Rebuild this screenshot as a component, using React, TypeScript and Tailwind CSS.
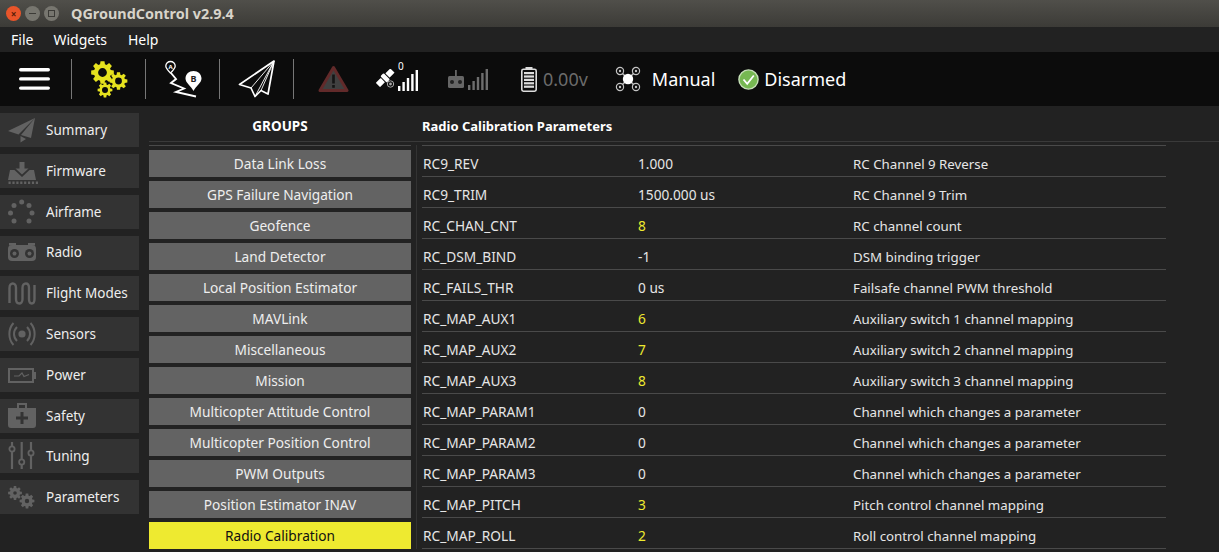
import React from "react";

function gearPath(cx: number, cy: number, R: number, r: number, hole: number, teeth: number) {
  const pts: string[] = [];
  const step = (Math.PI * 2) / teeth;
  for (let i = 0; i < teeth; i++) {
    const a = i * step;
    const w = step * 0.22;
    const v: [number, number][] = [
      [r, a - step / 2 + w * 0.6],
      [R, a - w],
      [R, a + w],
      [r, a + step / 2 - w * 0.6],
    ];
    v.forEach(([rad, an]) => pts.push(`${(cx + rad * Math.cos(an)).toFixed(2)} ${(cy + rad * Math.sin(an)).toFixed(2)}`));
  }
  const c = `M${cx - hole} ${cy}a${hole} ${hole} 0 1 0 ${hole * 2} 0a${hole} ${hole} 0 1 0 ${-hole * 2} 0Z`;
  return `M${pts.join("L")}Z${c}`;
}

const Hamburger = () => (
  <svg width="31" height="22" viewBox="0 0 31 22" className="block">
    <rect x="0" y="0" width="31" height="3.4" rx="1.7" fill="#fff" />
    <rect x="0" y="9.2" width="31" height="3.4" rx="1.7" fill="#fff" />
    <rect x="0" y="18.4" width="31" height="3.4" rx="1.7" fill="#fff" />
  </svg>
);

const Gears = () => (
  <svg width="37" height="37" viewBox="0 0 37 37" className="block">
    <path fillRule="evenodd" fill="#e6e21e" d={gearPath(11.5, 11.5, 11.5, 8.6, 4.4, 8)} />
    <path fillRule="evenodd" fill="#e6e21e" d={gearPath(27.5, 20, 9, 6.6, 3.4, 8)} />
    <path fillRule="evenodd" fill="#e6e21e" d={gearPath(14, 29, 7.5, 5.6, 3, 8)} />
  </svg>
);

const MapIcon = () => (
  <svg width="38" height="40" viewBox="0 0 38 40" className="block">
    <path d="M5.5 2.500C3 2.500 0.800 4.500 0.800 7 0.800 9.500 4 12.500 5.500 14 7 12.500 10.200 9.500 10.200 7 10.200 4.500 8 2.500 5.500 2.500Z" fill="none" stroke="#fff" strokeWidth="1.300" />
    <path d="M6 14L11 20L6 24L19 29.500L11 33L31 37.500" fill="none" stroke="#fff" strokeWidth="1.900" />
    <path d="M28.500 12C24 12 20.500 15 20.500 19.500C20.500 24 26 27 28.500 32C31 27 36.500 24 36.500 19.500C36.500 15 33 12 28.500 12Z" fill="#fff" />
    <text x="28.500" y="23" textAnchor="middle" fontSize="9" fontWeight="700" fill="#222" fontFamily="Noto Sans">B</text>
    <text x="5.500" y="9.500" textAnchor="middle" fontSize="6" fontWeight="700" fill="#fff" fontFamily="Noto Sans">A</text>
  </svg>
);

const Plane = () => (
  <svg width="38" height="38" viewBox="0 0 38 38" className="block">
    <path d="M36 1L1.500 24.500L13 28L17 36.500L23 30.500L30 34Z" fill="none" stroke="#fff" strokeWidth="1.700" strokeLinejoin="round" />
    <path d="M36 1L13 28M36 1L17 36.500M36 1L23 30.500" fill="none" stroke="#fff" strokeWidth="0.900" />
  </svg>
);

const Warning = () => (
  <svg width="31" height="28" viewBox="0 0 31 28" className="block">
    <path d="M15.500 2.500L29 25.500H2Z" fill="#404040" stroke="#622a2a" strokeWidth="3" strokeLinejoin="round" />
    <rect x="14.200" y="9.500" width="2.600" height="9" fill="#151515" />
    <rect x="14.200" y="20" width="2.600" height="2.800" fill="#151515" />
  </svg>
);

const Bars = ({ color }: { color: string }) => (
  <svg width="20" height="21" viewBox="0 0 20 21" className="block">
    <rect x="0" y="16" width="2.400" height="5" fill={color} />
    <rect x="4.400" y="12" width="2.400" height="9" fill={color} />
    <rect x="8.800" y="8" width="2.400" height="13" fill={color} />
    <rect x="13.200" y="4" width="2.400" height="17" fill={color} />
    <rect x="17.600" y="0" width="2.400" height="21" fill={color} />
  </svg>
);

const Satellite = () => (
  <svg width="21" height="21" viewBox="0 0 21 21" className="block">
    <g transform="rotate(-45 9 9)" fill="#fff">
      <rect x="-1" y="6" width="7" height="6" rx="0.500" />
      <rect x="7" y="4.500" width="4.500" height="9" rx="1" />
      <rect x="12.500" y="6" width="7" height="6" rx="0.500" />
    </g>
    <circle cx="14.500" cy="15" r="3.200" fill="none" stroke="#aaa" strokeWidth="1" />
    <circle cx="14.500" cy="15" r="1.400" fill="#aaa" />
  </svg>
);

const RadioSmall = () => (
  <svg width="16" height="18" viewBox="0 0 16 18" className="block">
    <rect x="7" y="0" width="1.800" height="8" fill="#666" />
    <rect x="0" y="6" width="16" height="12" rx="1.500" fill="#666" />
    <circle cx="4" cy="12" r="2" fill="#222" />
    <circle cx="12" cy="12" r="2" fill="#222" />
  </svg>
);

const Battery = () => (
  <svg width="16" height="25" viewBox="0 0 16 25" className="block">
    <rect x="4.500" y="0" width="7" height="2.500" fill="#ddd" />
    <rect x="0.800" y="2.300" width="14.400" height="21.900" rx="1.600" fill="none" stroke="#ddd" strokeWidth="1.600" />
    {[5, 8.400, 11.800, 15.200, 18.600].map((y) => (
      <rect key={y} x="3" y={y} width="10" height="2.200" fill="#ddd" />
    ))}
  </svg>
);

const Drone = () => (
  <svg width="26" height="26" viewBox="0 0 26 26" className="block">
    <path d="M5 5L21 21M21 5L5 21" stroke="#bbb" strokeWidth="1.600" />
    {[
      [5, 5],
      [21, 5],
      [5, 21],
      [21, 21],
    ].map(([x, y]) => (
      <g key={`${x}${y}`}>
        <circle cx={x} cy={y} r="3.600" fill="#0c0c0c" stroke="#c4c4c4" strokeWidth="1.200" />
        <circle cx={x} cy={y} r="1.200" fill="#c4c4c4" />
      </g>
    ))}
    <circle cx="13" cy="13" r="5.200" fill="#fff" />
  </svg>
);

const Check = () => (
  <svg width="21" height="21" viewBox="0 0 21 21" className="block">
    <circle cx="10.500" cy="10.500" r="9.600" fill="#76b852" stroke="#c6e0b8" strokeWidth="1.400" />
    <path d="M5.500 10.500L9.200 14.800L15.800 6.500" fill="none" stroke="#fff" strokeWidth="1.800" />
  </svg>
);

const G = "#626262";
const SideIcon = ({ name }: { name: string }) => {
  const s = { width: 30, height: 30, viewBox: "0 0 30 30", className: "block" };
  switch (name) {
    case "Summary":
      return (
        <svg {...s}>
          <path d="M27 3L0 16L10.500 19.500ZM27 3L13 20L23 23ZM12.500 21V27.500L18 24Z" fill={G} />
        </svg>
      );
    case "Firmware":
      return (
        <svg {...s}>
          <path d="M11.500 6H16.500V12.500H20.500L14 18.500L7.500 12.500H11.500Z" fill={G} />
          <path d="M2 14H6.500L14 21L21.500 14H26L28 24H0Z" fill={G} />
          {[0, 1, 2, 3, 4, 5, 6, 7].map((i) => (
            <rect key={i} x={0.500 + i * 3.900} y="25.500" width="2.200" height="2.500" fill={G} />
          ))}
        </svg>
      );
    case "Airframe":
      return (
        <svg {...s}>
          {[
            [13.700, 5],
            [21, 8.500],
            [24, 16],
            [21, 24],
            [6, 24],
            [2.500, 16],
            [6, 8.500],
          ].map(([x, y]) => (
            <circle key={`${x}-${y}`} cx={x} cy={y} r="2.500" fill={G} />
          ))}
        </svg>
      );
    case "Radio":
      return (
        <svg {...s}>
          <rect x="1" y="5" width="7" height="2.500" fill={G} />
          <rect x="20" y="5" width="7" height="2.500" fill={G} />
          <rect x="0" y="7" width="28" height="16" rx="4" fill={G} />
          <circle cx="6.500" cy="15.500" r="4.500" fill="#333" />
          <circle cx="6.500" cy="15.500" r="2" fill={G} />
          <circle cx="21.500" cy="15.500" r="4.500" fill="#333" />
          <circle cx="21.500" cy="15.500" r="2" fill={G} />
        </svg>
      );
    case "Flight Modes":
      return (
        <svg {...s}>
          <path d="M1.500 25V10C1.500 4 8 4 8 10V21C8 27 14.500 27 14.500 21V10C14.500 4 21 4 21 10V21C21 27 26.500 27 26.500 21V7" fill="none" stroke={G} strokeWidth="2.400" />
        </svg>
      );
    case "Sensors":
      return (
        <svg {...s}>
          <circle cx="14" cy="15" r="3.600" fill={G} />
          <path d="M9 8C5 12 5 18 9 22M19 8C23 12 23 18 19 22" fill="none" stroke={G} strokeWidth="2" />
          <path d="M5.500 4C0 10 0 20 5.500 26M22.500 4C28 10 28 20 22.500 26" fill="none" stroke={G} strokeWidth="2" />
        </svg>
      );
    case "Power":
      return (
        <svg {...s}>
          <rect x="1" y="9" width="24" height="13" fill="none" stroke={G} strokeWidth="2" />
          <rect x="25.500" y="12" width="2.500" height="7" fill={G} />
          <path d="M6 16L11 16L14 13L16 16.500L21 14.500" fill="none" stroke={G} strokeWidth="1.200" />
        </svg>
      );
    case "Safety":
      return (
        <svg {...s}>
          <path fillRule="evenodd" d="M9 2H19V7H28V24Q28 27 25 27H3Q0 27 0 24V7H9ZM11 4V7H17V4ZM12.500 11V15.500H8V18.500H12.500V23H15.500V18.500H20V15.500H15.500V11Z" fill={G} />
        </svg>
      );
    case "Tuning":
      return (
        <svg {...s}>
          <path d="M4 1V28M13.700 1V28M23 1V28" stroke={G} strokeWidth="2.200" />
          {[
            [4, 8],
            [13.700, 21],
            [23, 12],
          ].map(([x, y]) => (
            <circle key={x} cx={x} cy={y} r="2.600" fill="#333" stroke={G} strokeWidth="1.800" />
          ))}
        </svg>
      );
    default:
      return (
        <svg {...s}>
          <path fillRule="evenodd" fill={G} d={gearPath(7, 11, 7, 5.200, 1.800, 8)} />
          <path fillRule="evenodd" fill={G} d={gearPath(19, 19, 7.500, 5.600, 2.200, 8)} />
        </svg>
      );
  }
};

const nav = ["Summary", "Firmware", "Airframe", "Radio", "Flight Modes", "Sensors", "Power", "Safety", "Tuning", "Parameters"];
const groups = [
  "Data Link Loss",
  "GPS Failure Navigation",
  "Geofence",
  "Land Detector",
  "Local Position Estimator",
  "MAVLink",
  "Miscellaneous",
  "Mission",
  "Multicopter Attitude Control",
  "Multicopter Position Control",
  "PWM Outputs",
  "Position Estimator INAV",
  "Radio Calibration",
];
const rows: [string, string, string, boolean][] = [
  ["RC9_REV", "1.000", "RC Channel 9 Reverse", false],
  ["RC9_TRIM", "1500.000 us", "RC Channel 9 Trim", false],
  ["RC_CHAN_CNT", "8", "RC channel count", true],
  ["RC_DSM_BIND", "-1", "DSM binding trigger", false],
  ["RC_FAILS_THR", "0 us", "Failsafe channel PWM threshold", false],
  ["RC_MAP_AUX1", "6", "Auxiliary switch 1 channel mapping", true],
  ["RC_MAP_AUX2", "7", "Auxiliary switch 2 channel mapping", true],
  ["RC_MAP_AUX3", "8", "Auxiliary switch 3 channel mapping", true],
  ["RC_MAP_PARAM1", "0", "Channel which changes a parameter", false],
  ["RC_MAP_PARAM2", "0", "Channel which changes a parameter", false],
  ["RC_MAP_PARAM3", "0", "Channel which changes a parameter", false],
  ["RC_MAP_PITCH", "3", "Pitch control channel mapping", true],
  ["RC_MAP_ROLL", "2", "Roll control channel mapping", true],
];

const Sep = () => <div className="w-px h-[40px] bg-[#777]" />;

export default function App() {
  return (
    <div className="h-[552px] w-[1219px] overflow-hidden bg-[#222222] font-['Noto_Sans',sans-serif] text-[13.7px] text-[#e6e6e6] flex flex-col">
      <div className="h-[27px] shrink-0 flex items-center bg-gradient-to-b from-[#504f4a] to-[#3c3b37]">
        <div className="ml-[6px] w-[15px] h-[15px] rounded-full bg-[#e9552a] flex items-center justify-center text-[10px] leading-none text-[#5a1d08] font-bold">×</div>
        <div className="ml-[4px] w-[15px] h-[15px] rounded-full bg-[#77766f] flex items-center justify-center">
          <div className="w-[7px] h-px bg-[#3c3b37]" />
        </div>
        <div className="ml-[4px] w-[15px] h-[15px] rounded-full bg-[#77766f] flex items-center justify-center">
          <div className="w-[7px] h-[7px] border border-[#3c3b37]" />
        </div>
        <span className="ml-[12px] text-[14.4px] font-bold text-[#d8d4ca]">QGroundControl v2.9.4</span>
      </div>
      <div className="h-[25px] shrink-0 flex items-center bg-[#222222] pl-[11px] text-[14px] text-white">
        <span>File</span>
        <span className="ml-[20px]">Widgets</span>
        <span className="ml-[21px]">Help</span>
      </div>
      <div className="h-[54px] shrink-0 flex items-center bg-[#0c0c0c]">
        <div className="ml-[19px]"><Hamburger /></div>
        <div className="ml-[21px]"><Sep /></div>
        <div className="ml-[19px]"><Gears /></div>
        <div className="ml-[17px]"><Sep /></div>
        <div className="ml-[19px]"><MapIcon /></div>
        <div className="ml-[16px]"><Sep /></div>
        <div className="ml-[18px]"><Plane /></div>
        <div className="ml-[17px]"><Sep /></div>
        <div className="ml-[24px]"><Warning /></div>
        <div className="ml-[27px] mt-[1px]"><Satellite /></div>
        <div className="relative ml-[1px] mt-[2px]">
          <Bars color="#ffffff" />
          <span className="absolute left-0 -top-[9px] text-[10px] leading-none text-white">0</span>
        </div>
        <div className="ml-[30px]"><RadioSmall /></div>
        <div className="ml-[4px] mt-[1px]"><Bars color="#6e6e6e" /></div>
        <div className="ml-[33px]"><Battery /></div>
        <span className="ml-[6px] text-[18px] text-[#6b6b6b]">0.00v</span>
        <div className="ml-[27px]"><Drone /></div>
        <span className="ml-[11px] text-[18px] text-white">Manual</span>
        <div className="ml-[23px]"><Check /></div>
        <span className="ml-[5px] text-[18px] text-white">Disarmed</span>
      </div>
      <div className="flex-1 flex min-h-0">
        <div className="w-[139px] shrink-0 pt-[7.3px] flex flex-col gap-[6.78px]">
          {nav.map((n) => (
            <div key={n} className="h-[34px] shrink-0 bg-[#333333] flex items-center">
              <div className="ml-[8px] w-[38px] shrink-0"><SideIcon name={n} /></div>
              <span className="text-[13.5px] text-[#eeeeee]">{n}</span>
            </div>
          ))}
        </div>
        <div className="ml-[10px] flex-1 min-w-0 flex flex-col">
          <div className="h-[36px] shrink-0 flex items-center border-b border-[#3a3a3a] font-bold text-white pt-[6px]">
            <div className="w-[262px] text-center text-[13.5px]">GROUPS</div>
            <div className="ml-[11px] text-[13px]">Radio Calibration Parameters</div>
          </div>
          <div className="mt-[3px] flex">
            <div className="w-[262px] shrink-0 border-t border-[#4a4a4a] pt-[4px] flex flex-col gap-[4px]">
              {groups.map((g, i) => (
                <div
                  key={g}
                  className={
                    i === groups.length - 1
                      ? "h-[27px] shrink-0 flex items-center justify-center pt-[1px] bg-[#eeea30] text-[#111111]"
                      : "h-[27px] shrink-0 flex items-center justify-center pt-[1px] bg-[#636363] text-[#eeeeee]"
                  }
                >
                  {g}
                </div>
              ))}
            </div>
            <div className="ml-[5px] w-px bg-[#333333] shrink-0" />
            <div className="ml-[5px] w-[744px] shrink-0 border-t border-[#4a4a4a]">
              {rows.map(([a, b, c, y]) => (
                <div key={a} className="h-[31px] flex items-center border-b border-[#4a4a4a] pt-[7px]">
                  <div className="w-[216px] pl-[1px] shrink-0">{a}</div>
                  <div className={y ? "w-[215px] shrink-0 text-[#eeea30]" : "w-[215px] shrink-0"}>{b}</div>
                  <div className="text-[13.3px]">{c}</div>
                </div>
              ))}
            </div>
          </div>
        </div>
      </div>
    </div>
  );
}
